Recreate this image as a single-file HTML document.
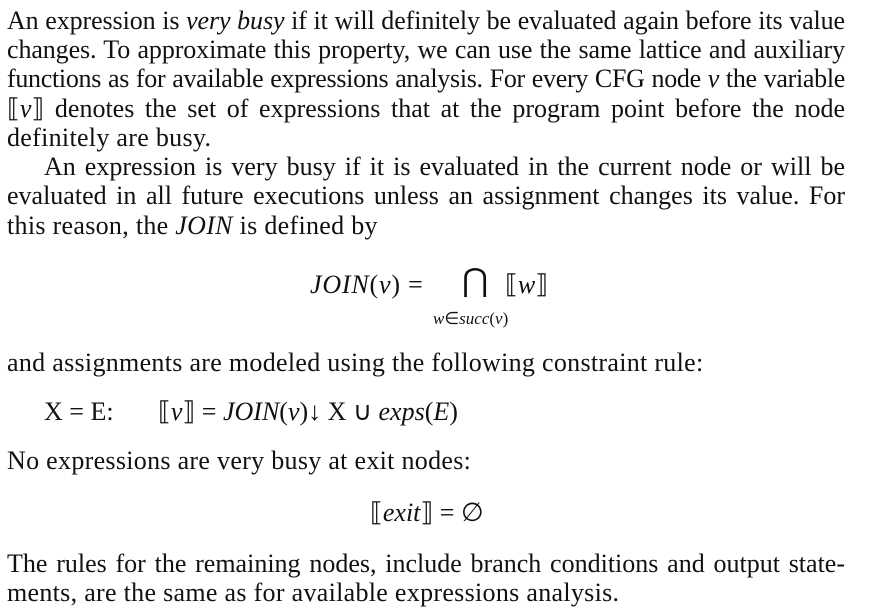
<!DOCTYPE html>
<html><head><meta charset="utf-8"><style>
body{margin:0;width:886px;height:611px;background:#fff;position:relative;overflow:hidden;font-family:"Liberation Serif",serif;font-size:26px;color:#111}
.l{position:absolute;left:7px;width:838px;height:29px;line-height:29px;white-space:nowrap;text-align:justify;text-align-last:justify}
.n{text-align-last:left;letter-spacing:0.3px}
i{font-style:italic}
.m{position:absolute;white-space:nowrap;line-height:29px}
</style></head><body>
<div class="l" style="top:6px;letter-spacing:-0.1px">An expression is <i>very busy</i> if it will definitely be evaluated again before its value</div>
<div class="l" style="top:35px;letter-spacing:-0.1px">changes. To approximate this property, we can use the same lattice and auxiliary</div>
<div class="l" style="top:64px;letter-spacing:-0.3px">functions as for available expressions analysis. For every CFG node <i>v</i> the variable</div>
<div class="l" style="top:94px">⟦<i>v</i>⟧ denotes the set of expressions that at the program point before the node</div>
<div class="l n" style="top:123px">definitely are busy.</div>
<div class="l" style="top:152px;left:44px;width:801px">An expression is very busy if it is evaluated in the current node or will be</div>
<div class="l" style="top:181px">evaluated in all future executions unless an assignment changes its value. For</div>
<div class="l n" style="top:211px">this reason, the <i>JOIN</i> is defined by</div>
<div class="m" style="top:270px;left:310px;letter-spacing:0.8px"><i>JOIN</i>(<i>v</i>) =</div>
<div class="m" style="top:266px;left:462px;font-size:32px">⋂</div>
<div class="m" style="top:270px;left:505px">⟦<i>w</i>⟧</div>
<div class="m" style="top:304px;left:433px;font-size:17px"><i>w</i>∈<i>succ</i>(<i>v</i>)</div>
<div class="l n" style="top:348px">and assignments are modeled using the following constraint rule:</div>
<div class="m" style="top:397px;left:44px">X = E:</div>
<div class="m" style="top:397px;left:158px">⟦<i>v</i>⟧ = <i>JOIN</i>(<i>v</i>)↓ X ∪ <i>exps</i>(<i>E</i>)</div>
<div class="l n" style="top:446px">No expressions are very busy at exit nodes:</div>
<div class="m" style="top:498px;left:370px">⟦<i>exit</i>⟧ = ∅</div>
<div class="l" style="top:549px">The rules for the remaining nodes, include branch conditions and output state-</div>
<div class="l n" style="top:578px">ments, are the same as for available expressions analysis.</div>
</body></html>
